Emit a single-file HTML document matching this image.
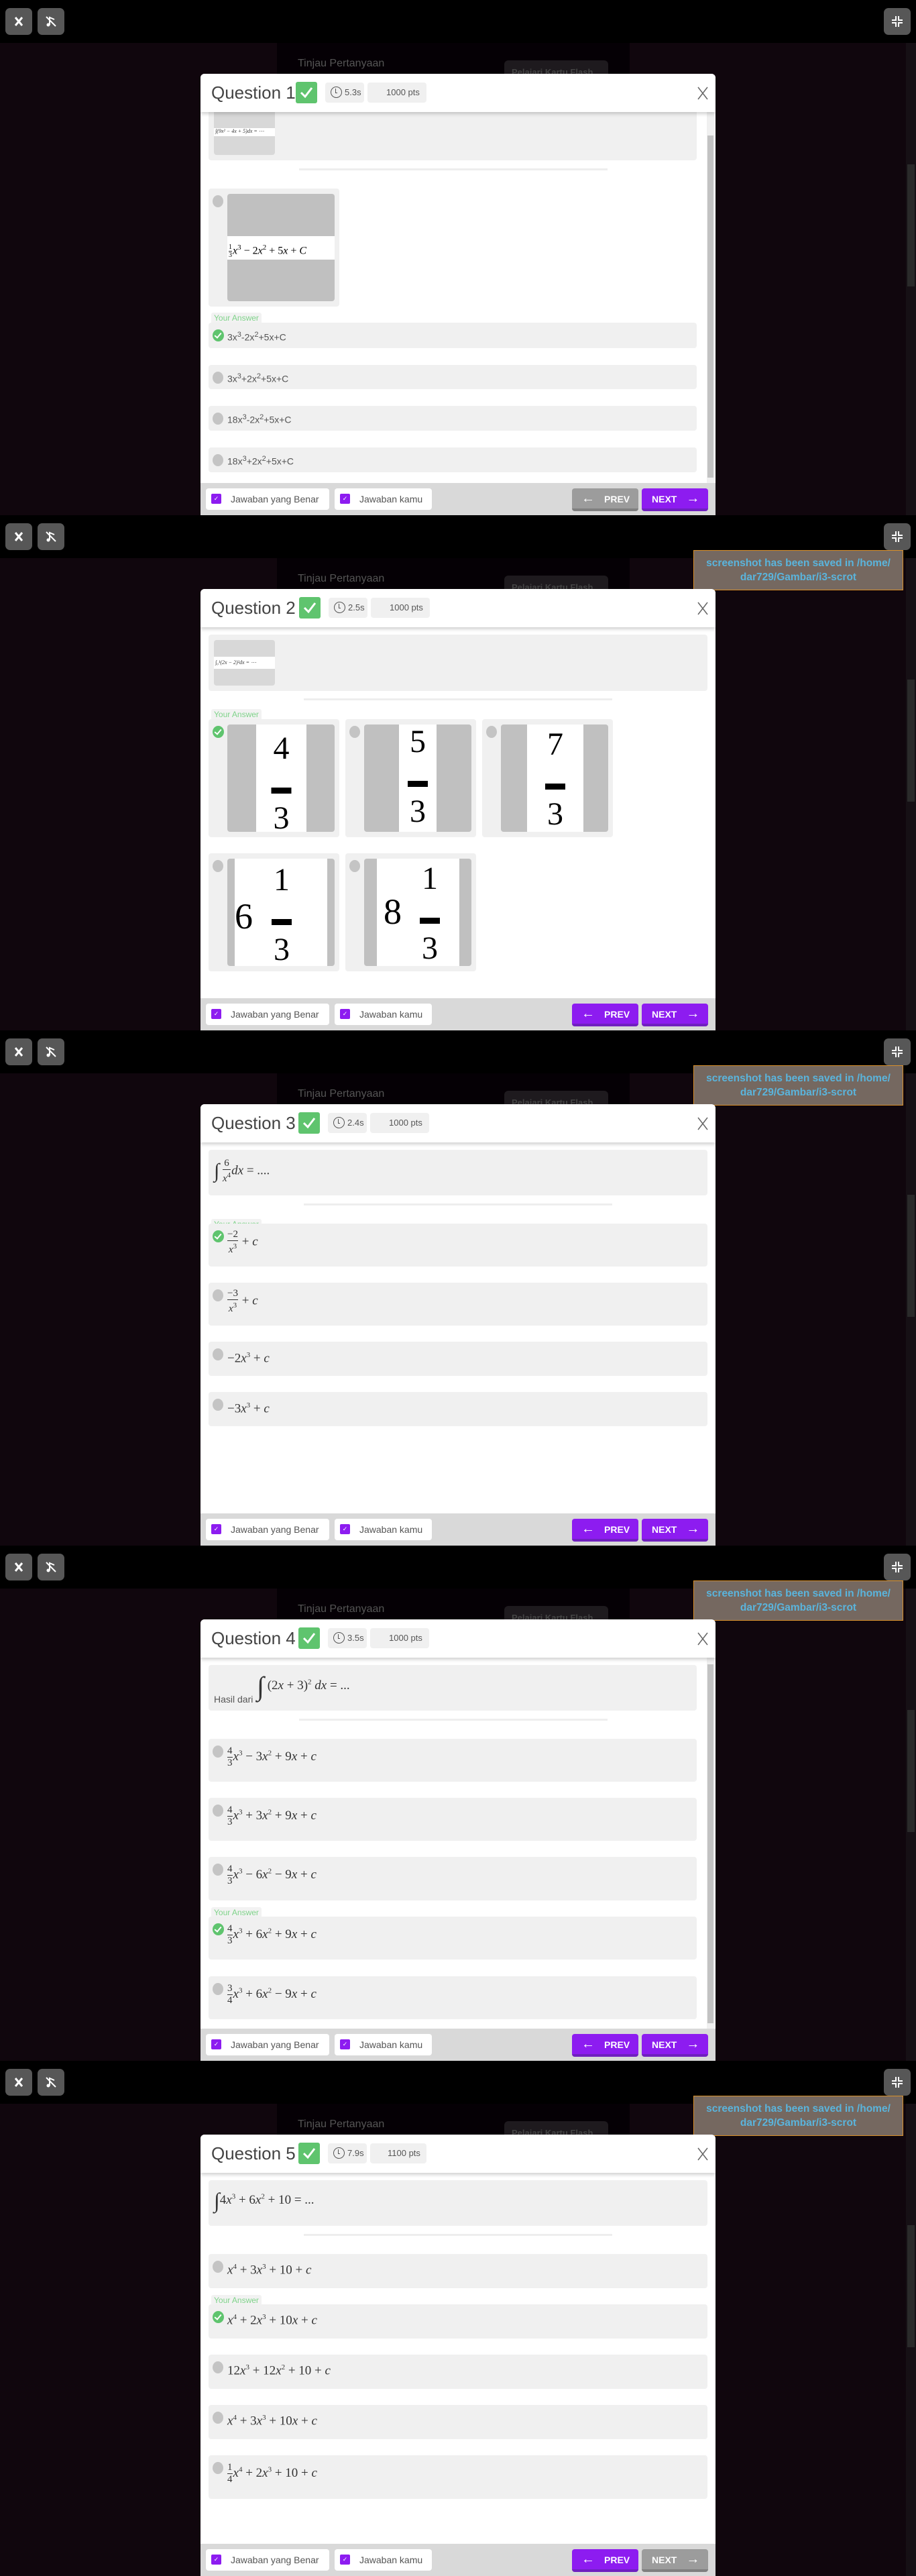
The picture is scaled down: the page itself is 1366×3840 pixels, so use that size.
<!DOCTYPE html>
<html><head><meta charset="utf-8">
<style>
*{box-sizing:border-box;margin:0;padding:0}
body{width:1366px;height:3840px;background:#10060d;font-family:"Liberation Sans",sans-serif;overflow:hidden;position:relative}
.panel{position:absolute;left:0;width:1366px;height:768px;background:#10060d;overflow:hidden}
.topbar{position:absolute;left:0;top:0;width:1366px;height:64px;background:#000}
.tb{position:absolute;top:12px;width:40px;height:40px;background:#575757;border-radius:7px}
.tb svg{position:absolute;left:10px;top:10px}
.behind{position:absolute;left:413px;top:64px;width:526px;height:704px;background:#050005}
.tinjau{position:absolute;left:444px;top:86px;color:#555;font-size:16px}
.flash{position:absolute;left:752px;top:90px;width:155px;height:30px;background:#1e1a1e;border-radius:6px;color:#444;font-size:13px;padding:10px 0 0 11px;font-weight:bold}
.pscroll{position:absolute;left:1351px;top:64px;width:15px;height:704px;background:#161015}
.pthumb{position:absolute;left:1353px;top:245px;width:11px;height:182px;background:#2a2a2a}
.toast{position:absolute;left:1034px;top:52px;width:313px;height:60px;background:#756860;border:1px solid #d9902a;color:#5ab4dc;font-weight:bold;font-size:15.5px;text-align:center;line-height:21px;padding-top:8px}
.modal{position:absolute;left:299px;top:110px;width:768px;height:658px;background:#fff;border-radius:6px 6px 0 0;overflow:hidden}
.hdr{position:absolute;left:0;top:0;width:768px;height:57px;background:#fff;box-shadow:0 3px 5px rgba(0,0,0,.18);z-index:5}
.qt{position:absolute;left:16px;top:13px;font-size:26px;color:#444}
.chk{position:absolute;top:12px;width:32px;height:32px;background:#5fc46e;border-radius:3px}
.chk svg{position:absolute;left:6px;top:7px}
.pill{position:absolute;top:13px;height:30px;background:#f0f0f0;border-radius:4px;font-size:13px;color:#555;line-height:30px}
.clock{display:inline-block;width:17px;height:17px;border:1.5px solid #555;border-radius:50%;vertical-align:middle;margin:-3px 4px 0 8px;position:relative}
.clock:after{content:"";position:absolute;left:6px;top:2px;width:2px;height:6px;border-left:1.5px solid #555;border-bottom:1.5px solid #555}
.cls{position:absolute;left:741px;top:19px}
.qbox{position:absolute;background:#f0f0f0;border-radius:4px}
.thumb{position:absolute;background:#d8d8d8;border-radius:4px;overflow:hidden}
.strip{position:absolute;left:0;width:100%;background:#fff;font-family:"Liberation Serif",serif;font-style:italic;font-size:8px;color:#333;padding-left:2px;white-space:nowrap}
.div{position:absolute;height:3px;background:#eee}
.opt{position:absolute;background:#f0f0f0;border-radius:4px}
.rad{position:absolute;left:6px;top:10px;width:16px;height:18px;border-radius:50%;background:#c4c4c4}
.ok{position:absolute;left:6px;top:10px;width:17px;height:18px;border-radius:50%;background:#5fc46e}
.ok:after{content:"";position:absolute;left:5px;top:3px;width:4px;height:8px;border-right:2px solid #fff;border-bottom:2px solid #fff;transform:rotate(40deg)}
.lbl{position:absolute;left:16px;height:16px;background:#f2f2f2;color:#7fd38a;font-size:12px;padding:1px 4px;border-radius:3px 3px 0 0}
.txt{position:absolute;left:28px;font-size:14px;color:#555}
.m{position:absolute;left:28px;font-family:"Liberation Serif",serif;font-size:19px;color:#333;white-space:nowrap}
.m i{font-style:italic}
.fr{display:inline-block;vertical-align:middle;text-align:center;font-size:15px;line-height:17px;margin-right:1px}
.fr span{display:block}
.fr span:first-child{border-bottom:1px solid #333}
sup{font-size:11px}
.card{position:absolute;background:#f0f0f0;border-radius:4px}
.cimg{position:absolute;left:28px;top:8px;width:160px;height:160px;background:#c0c0c0;border-radius:4px;overflow:hidden}
.wb{position:absolute;top:0;height:160px;background:#fff;font-family:"Liberation Serif",serif;color:#000;text-align:center}
.foot{position:absolute;left:0;top:610px;width:768px;height:48px;background:#d9d9d9}
.fp{position:absolute;top:8px;height:32px;background:#fff;border-radius:4px;font-size:14px;color:#555;line-height:32px}
.cb{position:absolute;left:8px;top:8px;width:15px;height:15px;background:#8d1cf0;border-radius:2px;color:#fff;font-size:9px;line-height:15px;text-align:center}
.nb{position:absolute;top:8px;width:99px;height:34px;border-radius:4px;color:#fff;font-size:14px;font-weight:bold;line-height:30px}
.purple{background:#8d1cf0;border-bottom:4px solid #7020c0}
.grey{background:#9c9c9c;border-bottom:4px solid #7f7f7f}
.sb{position:absolute;left:755px;top:57px;width:11px;height:553px;background:#f0f0f0}
.sbt{position:absolute;left:1px;width:9px;background:#c2c2c2}
</style></head><body>

<!-- PANEL 1 -->
<div class="panel" style="top:0">
<div class="topbar"></div>
<div class="tb" style="left:8px"><svg width="20" height="20"><path d="M5 4L15 16M15 4L5 16" stroke="#fff" stroke-width="3"/></svg></div>
<div class="tb" style="left:56px"><svg width="20" height="20"><path d="M8 15V4l7 3M3 3l14 14" stroke="#fff" stroke-width="2" fill="none"/><circle cx="6" cy="15" r="2.5" fill="#fff"/></svg></div>
<div class="tb" style="left:1318px"><svg width="20" height="20"><path d="M2 8h6V2M12 2v6h6M2 12h6v6M18 12h-6v6" stroke="#fff" stroke-width="2" fill="none"/></svg></div>
<div class="behind"></div><div class="tinjau">Tinjau Pertanyaan</div><div class="flash">Pelajari Kartu Flash</div>
<div class="pscroll"></div><div class="pthumb"></div>
<div class="modal">
 <div class="hdr"><div class="qt">Question 1</div><div class="chk" style="left:142px"><svg width="20" height="18"><path d="M2 9l6 6L18 2" stroke="#fff" stroke-width="3" fill="none"/></svg></div>
  <div class="pill" style="left:186px;width:58px"><span class="clock"></span>5.3s</div>
  <div class="pill" style="left:249px;width:88px;padding-left:28px">1000 pts</div>
  <div class="cls"><svg width="16" height="20"><path d="M1 1L15 19M15 1L1 19" stroke="#666" stroke-width="1.5"/></svg></div></div>
 <div class="qbox" style="left:12px;top:40px;width:728px;height:89px"></div>
 <div class="thumb" style="left:20px;top:40px;width:91px;height:81px"><div class="strip" style="top:41px;height:12px">∫(9x² − 4x + 5)dx = ⋯</div></div>
 <div class="div" style="left:147px;top:141px;width:460px"></div>
 <div class="card" style="left:12px;top:171px;width:195px;height:176px"><div class="rad"></div>
  <div class="cimg"><div class="wb" style="left:0;top:63px;width:160px;height:35px;font-size:16px;text-align:left;padding-left:2px;line-height:35px;white-space:nowrap"><span class="fr" style="font-size:10px;line-height:11px"><span>1</span><span>3</span></span><i>x</i><sup>3</sup> − 2<i>x</i><sup>2</sup> + 5<i>x</i> + <i>C</i></div></div></div>
 <div class="lbl" style="top:356px">Your Answer</div>
 <div class="opt" style="left:12px;top:371px;width:728px;height:38px"><div class="ok"></div><div class="txt" style="top:12px">3x<sup>3</sup>-2x<sup>2</sup>+5x+C</div></div>
 <div class="opt" style="left:12px;top:434px;width:728px;height:36px"><div class="rad"></div><div class="txt" style="top:11px">3x<sup>3</sup>+2x<sup>2</sup>+5x+C</div></div>
 <div class="opt" style="left:12px;top:495px;width:728px;height:37px"><div class="rad"></div><div class="txt" style="top:11px">18x<sup>3</sup>-2x<sup>2</sup>+5x+C</div></div>
 <div class="opt" style="left:12px;top:557px;width:728px;height:37px"><div class="rad"></div><div class="txt" style="top:11px">18x<sup>3</sup>+2x<sup>2</sup>+5x+C</div></div>
 <div class="sb"><div class="sbt" style="top:35px;height:510px"></div></div>
 <div class="foot">
  <div class="fp" style="left:8px;width:184px"><div class="cb">✓</div><span style="margin-left:37px">Jawaban yang Benar</span></div>
  <div class="fp" style="left:200px;width:145px"><div class="cb">✓</div><span style="margin-left:37px">Jawaban kamu</span></div>
  <div class="nb grey" style="left:554px"><span style="margin-left:14px;font-size:20px">←</span><span style="margin-left:14px">PREV</span></div>
  <div class="nb purple" style="left:658px"><span style="margin-left:15px">NEXT</span><span style="margin-left:14px;font-size:20px">→</span></div>
 </div>
</div>
</div>

<!-- PANEL 2 -->
<div class="panel" style="top:768px">
<div class="topbar"></div>
<div class="tb" style="left:8px"><svg width="20" height="20"><path d="M5 4L15 16M15 4L5 16" stroke="#fff" stroke-width="3"/></svg></div>
<div class="tb" style="left:56px"><svg width="20" height="20"><path d="M8 15V4l7 3M3 3l14 14" stroke="#fff" stroke-width="2" fill="none"/><circle cx="6" cy="15" r="2.5" fill="#fff"/></svg></div>
<div class="tb" style="left:1318px"><svg width="20" height="20"><path d="M2 8h6V2M12 2v6h6M2 12h6v6M18 12h-6v6" stroke="#fff" stroke-width="2" fill="none"/></svg></div>
<div class="behind"></div><div class="tinjau">Tinjau Pertanyaan</div><div class="flash">Pelajari Kartu Flash</div>
<div class="pscroll"></div><div class="pthumb"></div>
<div class="modal">
 <div class="hdr"><div class="qt">Question 2</div><div class="chk" style="left:147px"><svg width="20" height="18"><path d="M2 9l6 6L18 2" stroke="#fff" stroke-width="3" fill="none"/></svg></div>
  <div class="pill" style="left:191px;width:58px"><span class="clock"></span>2.5s</div>
  <div class="pill" style="left:254px;width:88px;padding-left:28px">1000 pts</div>
  <div class="cls"><svg width="16" height="20"><path d="M1 1L15 19M15 1L1 19" stroke="#666" stroke-width="1.5"/></svg></div></div>
 <div class="qbox" style="left:12px;top:68px;width:744px;height:84px"></div>
 <div class="thumb" style="left:20px;top:76px;width:91px;height:68px"><div class="strip" style="top:25px;height:18px;line-height:18px">∫₀¹(2x − 2)²dx = ⋯</div></div>
 <div class="div" style="left:154px;top:163px;width:460px"></div>
 <div class="lbl" style="top:179px">Your Answer</div>
 <div class="card" style="left:12px;top:194px;width:195px;height:176px"><div class="ok"></div><div class="cimg"><div class="wb" style="left:43px;width:75px;font-size:48px;line-height:52px;padding-top:10px">4<br><span style="font-size:30px;line-height:20px">▬</span><br>3</div></div></div>
 <div class="card" style="left:216px;top:194px;width:195px;height:176px"><div class="rad"></div><div class="cimg"><div class="wb" style="left:52px;width:56px;font-size:48px;line-height:52px;padding-top:0">5<br><span style="font-size:30px;line-height:20px">▬</span><br>3</div></div></div>
 <div class="card" style="left:420px;top:194px;width:195px;height:176px"><div class="rad"></div><div class="cimg"><div class="wb" style="left:39px;width:84px;font-size:48px;line-height:52px;padding-top:4px">7<br><span style="font-size:30px;line-height:20px">▬</span><br>3</div></div></div>
 <div class="card" style="left:12px;top:394px;width:195px;height:176px"><div class="rad"></div><div class="cimg"><div class="wb" style="left:11px;width:138px;font-size:48px;padding-top:6px;text-align:left"><span style="position:absolute;left:0;top:55px;font-size:54px">6</span><span style="position:absolute;left:55px;top:6px;line-height:52px;text-align:center">1<br><span style="font-size:30px;line-height:20px">▬</span><br>3</span></div></div></div>
 <div class="card" style="left:216px;top:394px;width:195px;height:176px"><div class="rad"></div><div class="cimg"><div class="wb" style="left:19px;width:123px;font-size:48px;text-align:left"><span style="position:absolute;left:10px;top:48px;font-size:54px">8</span><span style="position:absolute;left:64px;top:4px;line-height:52px;text-align:center">1<br><span style="font-size:30px;line-height:20px">▬</span><br>3</span></div></div></div>
 <div class="foot">
  <div class="fp" style="left:8px;width:184px"><div class="cb">✓</div><span style="margin-left:37px">Jawaban yang Benar</span></div>
  <div class="fp" style="left:200px;width:145px"><div class="cb">✓</div><span style="margin-left:37px">Jawaban kamu</span></div>
  <div class="nb purple" style="left:554px"><span style="margin-left:14px;font-size:20px">←</span><span style="margin-left:14px">PREV</span></div>
  <div class="nb purple" style="left:658px"><span style="margin-left:15px">NEXT</span><span style="margin-left:14px;font-size:20px">→</span></div>
 </div>
</div>
<div class="toast">screenshot has been saved in /home/<br>dar729/Gambar/i3-scrot</div>
</div>

<!-- PANEL 3 -->
<div class="panel" style="top:1536px">
<div class="topbar"></div>
<div class="tb" style="left:8px"><svg width="20" height="20"><path d="M5 4L15 16M15 4L5 16" stroke="#fff" stroke-width="3"/></svg></div>
<div class="tb" style="left:56px"><svg width="20" height="20"><path d="M8 15V4l7 3M3 3l14 14" stroke="#fff" stroke-width="2" fill="none"/><circle cx="6" cy="15" r="2.5" fill="#fff"/></svg></div>
<div class="tb" style="left:1318px"><svg width="20" height="20"><path d="M2 8h6V2M12 2v6h6M2 12h6v6M18 12h-6v6" stroke="#fff" stroke-width="2" fill="none"/></svg></div>
<div class="behind"></div><div class="tinjau">Tinjau Pertanyaan</div><div class="flash">Pelajari Kartu Flash</div>
<div class="pscroll"></div><div class="pthumb"></div>
<div class="modal">
 <div class="hdr"><div class="qt">Question 3</div><div class="chk" style="left:146px"><svg width="20" height="18"><path d="M2 9l6 6L18 2" stroke="#fff" stroke-width="3" fill="none"/></svg></div>
  <div class="pill" style="left:190px;width:58px"><span class="clock"></span>2.4s</div>
  <div class="pill" style="left:253px;width:88px;padding-left:28px">1000 pts</div>
  <div class="cls"><svg width="16" height="20"><path d="M1 1L15 19M15 1L1 19" stroke="#666" stroke-width="1.5"/></svg></div></div>
 <div class="qbox" style="left:12px;top:68px;width:744px;height:68px"></div>
 <div class="m" style="left:20px;top:80px"><span style="font-size:30px;vertical-align:middle">∫</span> <span class="fr"><span>6</span><span><i>x</i><sup>4</sup></span></span><i>dx</i> = ....</div>
 <div class="div" style="left:154px;top:148px;width:460px"></div>
 <div class="lbl" style="top:171px">Your Answer</div>
 <div class="opt" style="left:12px;top:178px;width:744px;height:64px"><div class="ok"></div><div class="m" style="top:8px"><span class="fr"><span>−2</span><span><i>x</i><sup>3</sup></span></span> + <i>c</i></div></div>
 <div class="opt" style="left:12px;top:266px;width:744px;height:64px"><div class="rad"></div><div class="m" style="top:8px"><span class="fr"><span>−3</span><span><i>x</i><sup>3</sup></span></span> + <i>c</i></div></div>
 <div class="opt" style="left:12px;top:354px;width:744px;height:51px"><div class="rad"></div><div class="m" style="top:14px">−2<i>x</i><sup>3</sup> + <i>c</i></div></div>
 <div class="opt" style="left:12px;top:429px;width:744px;height:51px"><div class="rad"></div><div class="m" style="top:14px">−3<i>x</i><sup>3</sup> + <i>c</i></div></div>
 <div class="foot">
  <div class="fp" style="left:8px;width:184px"><div class="cb">✓</div><span style="margin-left:37px">Jawaban yang Benar</span></div>
  <div class="fp" style="left:200px;width:145px"><div class="cb">✓</div><span style="margin-left:37px">Jawaban kamu</span></div>
  <div class="nb purple" style="left:554px"><span style="margin-left:14px;font-size:20px">←</span><span style="margin-left:14px">PREV</span></div>
  <div class="nb purple" style="left:658px"><span style="margin-left:15px">NEXT</span><span style="margin-left:14px;font-size:20px">→</span></div>
 </div>
</div>
<div class="toast">screenshot has been saved in /home/<br>dar729/Gambar/i3-scrot</div>
</div>

<!-- PANEL 4 -->
<div class="panel" style="top:2304px">
<div class="topbar"></div>
<div class="tb" style="left:8px"><svg width="20" height="20"><path d="M5 4L15 16M15 4L5 16" stroke="#fff" stroke-width="3"/></svg></div>
<div class="tb" style="left:56px"><svg width="20" height="20"><path d="M8 15V4l7 3M3 3l14 14" stroke="#fff" stroke-width="2" fill="none"/><circle cx="6" cy="15" r="2.5" fill="#fff"/></svg></div>
<div class="tb" style="left:1318px"><svg width="20" height="20"><path d="M2 8h6V2M12 2v6h6M2 12h6v6M18 12h-6v6" stroke="#fff" stroke-width="2" fill="none"/></svg></div>
<div class="behind"></div><div class="tinjau">Tinjau Pertanyaan</div><div class="flash">Pelajari Kartu Flash</div>
<div class="pscroll"></div><div class="pthumb"></div>
<div class="modal">
 <div class="hdr"><div class="qt">Question 4</div><div class="chk" style="left:146px"><svg width="20" height="18"><path d="M2 9l6 6L18 2" stroke="#fff" stroke-width="3" fill="none"/></svg></div>
  <div class="pill" style="left:190px;width:58px"><span class="clock"></span>3.5s</div>
  <div class="pill" style="left:253px;width:88px;padding-left:28px">1000 pts</div>
  <div class="cls"><svg width="16" height="20"><path d="M1 1L15 19M15 1L1 19" stroke="#666" stroke-width="1.5"/></svg></div></div>
 <div class="qbox" style="left:12px;top:68px;width:728px;height:68px"></div>
 <div class="txt" style="left:20px;top:111px;font-size:14px">Hasil dari</div>
 <div class="m" style="left:84px;top:76px"><span style="font-size:40px;vertical-align:middle">∫</span> (2<i>x</i> + 3)<sup>2</sup> <i>dx</i> = ...</div>
 <div class="div" style="left:147px;top:148px;width:460px"></div>
 <div class="opt" style="left:12px;top:178px;width:728px;height:64px"><div class="rad"></div><div class="m" style="top:10px"><span class="fr"><span>4</span><span>3</span></span><i>x</i><sup>3</sup> − 3<i>x</i><sup>2</sup> + 9<i>x</i> + <i>c</i></div></div>
 <div class="opt" style="left:12px;top:266px;width:728px;height:64px"><div class="rad"></div><div class="m" style="top:10px"><span class="fr"><span>4</span><span>3</span></span><i>x</i><sup>3</sup> + 3<i>x</i><sup>2</sup> + 9<i>x</i> + <i>c</i></div></div>
 <div class="opt" style="left:12px;top:354px;width:728px;height:65px"><div class="rad"></div><div class="m" style="top:10px"><span class="fr"><span>4</span><span>3</span></span><i>x</i><sup>3</sup> − 6<i>x</i><sup>2</sup> − 9<i>x</i> + <i>c</i></div></div>
 <div class="lbl" style="top:429px">Your Answer</div>
 <div class="opt" style="left:12px;top:443px;width:728px;height:64px"><div class="ok"></div><div class="m" style="top:10px"><span class="fr"><span>4</span><span>3</span></span><i>x</i><sup>3</sup> + 6<i>x</i><sup>2</sup> + 9<i>x</i> + <i>c</i></div></div>
 <div class="opt" style="left:12px;top:532px;width:728px;height:64px"><div class="rad"></div><div class="m" style="top:10px"><span class="fr"><span>3</span><span>4</span></span><i>x</i><sup>3</sup> + 6<i>x</i><sup>2</sup> − 9<i>x</i> + <i>c</i></div></div>
 <div class="sb"><div class="sbt" style="top:10px;height:535px"></div></div>
 <div class="foot">
  <div class="fp" style="left:8px;width:184px"><div class="cb">✓</div><span style="margin-left:37px">Jawaban yang Benar</span></div>
  <div class="fp" style="left:200px;width:145px"><div class="cb">✓</div><span style="margin-left:37px">Jawaban kamu</span></div>
  <div class="nb purple" style="left:554px"><span style="margin-left:14px;font-size:20px">←</span><span style="margin-left:14px">PREV</span></div>
  <div class="nb purple" style="left:658px"><span style="margin-left:15px">NEXT</span><span style="margin-left:14px;font-size:20px">→</span></div>
 </div>
</div>
<div class="toast">screenshot has been saved in /home/<br>dar729/Gambar/i3-scrot</div>
</div>

<!-- PANEL 5 -->
<div class="panel" style="top:3072px">
<div class="topbar"></div>
<div class="tb" style="left:8px"><svg width="20" height="20"><path d="M5 4L15 16M15 4L5 16" stroke="#fff" stroke-width="3"/></svg></div>
<div class="tb" style="left:56px"><svg width="20" height="20"><path d="M8 15V4l7 3M3 3l14 14" stroke="#fff" stroke-width="2" fill="none"/><circle cx="6" cy="15" r="2.5" fill="#fff"/></svg></div>
<div class="tb" style="left:1318px"><svg width="20" height="20"><path d="M2 8h6V2M12 2v6h6M2 12h6v6M18 12h-6v6" stroke="#fff" stroke-width="2" fill="none"/></svg></div>
<div class="behind"></div><div class="tinjau">Tinjau Pertanyaan</div><div class="flash">Pelajari Kartu Flash</div>
<div class="pscroll"></div><div class="pthumb"></div>
<div class="modal">
 <div class="hdr"><div class="qt">Question 5</div><div class="chk" style="left:146px"><svg width="20" height="18"><path d="M2 9l6 6L18 2" stroke="#fff" stroke-width="3" fill="none"/></svg></div>
  <div class="pill" style="left:190px;width:58px"><span class="clock"></span>7.9s</div>
  <div class="pill" style="left:253px;width:84px;padding-left:26px">1100 pts</div>
  <div class="cls"><svg width="16" height="20"><path d="M1 1L15 19M15 1L1 19" stroke="#666" stroke-width="1.5"/></svg></div></div>
 <div class="qbox" style="left:12px;top:68px;width:744px;height:68px"></div>
 <div class="m" style="left:20px;top:80px"><span style="font-size:32px;vertical-align:middle">∫</span>4<i>x</i><sup>3</sup> + 6<i>x</i><sup>2</sup> + 10 = ...</div>
 <div class="div" style="left:154px;top:148px;width:460px"></div>
 <div class="opt" style="left:12px;top:178px;width:744px;height:51px"><div class="rad"></div><div class="m" style="top:13px"><i>x</i><sup>4</sup> + 3<i>x</i><sup>3</sup> + 10 + <i>c</i></div></div>
 <div class="lbl" style="top:239px">Your Answer</div>
 <div class="opt" style="left:12px;top:253px;width:744px;height:51px"><div class="ok"></div><div class="m" style="top:13px"><i>x</i><sup>4</sup> + 2<i>x</i><sup>3</sup> + 10<i>x</i> + <i>c</i></div></div>
 <div class="opt" style="left:12px;top:328px;width:744px;height:51px"><div class="rad"></div><div class="m" style="top:13px">12<i>x</i><sup>3</sup> + 12<i>x</i><sup>2</sup> + 10 + <i>c</i></div></div>
 <div class="opt" style="left:12px;top:403px;width:744px;height:51px"><div class="rad"></div><div class="m" style="top:13px"><i>x</i><sup>4</sup> + 3<i>x</i><sup>3</sup> + 10<i>x</i> + <i>c</i></div></div>
 <div class="opt" style="left:12px;top:478px;width:744px;height:65px"><div class="rad"></div><div class="m" style="top:10px"><span class="fr"><span>1</span><span>4</span></span><i>x</i><sup>4</sup> + 2<i>x</i><sup>3</sup> + 10 + <i>c</i></div></div>
 <div class="foot">
  <div class="fp" style="left:8px;width:184px"><div class="cb">✓</div><span style="margin-left:37px">Jawaban yang Benar</span></div>
  <div class="fp" style="left:200px;width:145px"><div class="cb">✓</div><span style="margin-left:37px">Jawaban kamu</span></div>
  <div class="nb purple" style="left:554px"><span style="margin-left:14px;font-size:20px">←</span><span style="margin-left:14px">PREV</span></div>
  <div class="nb grey" style="left:658px"><span style="margin-left:15px">NEXT</span><span style="margin-left:14px;font-size:20px">→</span></div>
 </div>
</div>
<div class="toast">screenshot has been saved in /home/<br>dar729/Gambar/i3-scrot</div>
</div>

</body></html>
